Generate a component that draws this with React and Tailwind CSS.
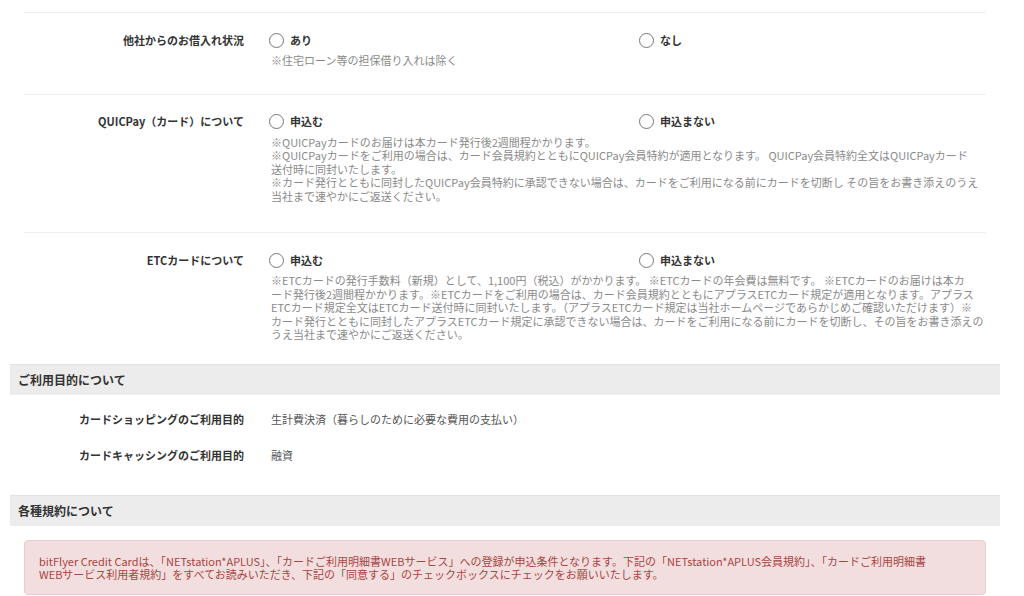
// Application form — borrowing / QUICPay / ETC options, purpose, terms notice.

const FONT = { fontFamily: '"Noto Sans CJK JP", "Noto Sans", sans-serif' };

const optionRows = [
  {
    label: "他社からのお借入れ状況",
    options: ["あり", "なし"],
    notes: ["※住宅ローン等の担保借り入れは除く"],
    pb: "pb-[26px]",
  },
  {
    label: "QUICPay（カード）について",
    options: ["申込む", "申込まない"],
    notes: [
      "※QUICPayカードのお届けは本カード発行後2週間程かかります。",
      "※QUICPayカードをご利用の場合は、カード会員規約とともにQUICPay会員特約が適用となります。 QUICPay会員特約全文はQUICPayカード",
      "送付時に同封いたします。",
      "※カード発行とともに同封したQUICPay会員特約に承認できない場合は、カードをご利用になる前にカードを切断し その旨をお書き添えのうえ",
      "当社まで速やかにご返送ください。",
    ],
    pb: "pb-[29px]",
  },
  {
    label: "ETCカードについて",
    options: ["申込む", "申込まない"],
    notes: [
      "※ETCカードの発行手数料（新規）として、1,100円（税込）がかかります。 ※ETCカードの年会費は無料です。 ※ETCカードのお届けは本カ",
      "ード発行後2週間程かかります。※ETCカードをご利用の場合は、カード会員規約とともにアプラスETCカード規定が適用となります。アプラス",
      "ETCカード規定全文はETCカード送付時に同封いたします。（アプラスETCカード規定は当社ホームページであらかじめご確認いただけます）※",
      "カード発行とともに同封したアプラスETCカード規定に承認できない場合は、カードをご利用になる前にカードを切断し、その旨をお書き添えの",
      "うえ当社まで速やかにご返送ください。",
    ],
    pb: "pb-[22px]",
  },
];

const purposes = [
  { label: "カードショッピングのご利用目的", value: "生計費決済（暮らしのために必要な費用の支払い）" },
  { label: "カードキャッシングのご利用目的", value: "融資" },
];

const Radio = ({ children }) => (
  <label className="flex h-4 items-center gap-[6px] text-[11px] font-bold text-[#333]">
    <span className="h-[15px] w-[15px] rounded-full border border-[#777] bg-white" />
    {children}
  </label>
);

const OptionRow = ({ row }) => (
  <div className={`mx-[14px] flex border-t border-[#eeeeee] pt-[19px] ${row.pb}`}>
    <div className="flex h-4 w-[220px] shrink-0 items-center justify-end text-[11px] font-bold text-[#333]">
      {row.label}
    </div>
    <div className="ml-[25px] flex-1">
      <div className="flex">
        <div className="w-[370px]">
          <Radio>{row.options[0]}</Radio>
        </div>
        <Radio>{row.options[1]}</Radio>
      </div>
      <div className="mt-[6px] ml-[2px] text-[11px] leading-[13.5px] whitespace-nowrap text-[#8a8a8a]">
        {row.notes.map((line, i) => (
          <p key={i} className="h-[13.5px]">
            {line}
          </p>
        ))}
      </div>
    </div>
  </div>
);

const SectionHeader = ({ children }) => (
  <div className="flex h-[31px] items-center border-t border-[#e2e2e2] bg-[#ececec] px-2 text-[12px] font-bold text-[#333]">
    {children}
  </div>
);

export default function App() {
  return (
    <div className="min-h-screen bg-white" style={FONT}>
      <div className="mx-[10px] w-[990px] pt-3">
        {optionRows.map((row) => (
          <OptionRow key={row.label} row={row} />
        ))}

        <SectionHeader>ご利用目的について</SectionHeader>
        <div className="mx-[14px] pt-[7px] pb-[21px]">
          {purposes.map((p) => (
            <div key={p.label} className="flex h-9 items-center">
              <div className="w-[220px] shrink-0 text-right text-[11px] font-bold text-[#333]">
                {p.label}
              </div>
              <div className="ml-[27px] text-[11px] text-[#555]">{p.value}</div>
            </div>
          ))}
        </div>

        <SectionHeader>各種規約について</SectionHeader>
        <div className="mx-[14px] mt-[14px] rounded border border-[#ebccd1] bg-[#f2dede] px-[14px] pt-[14px] pb-[13px] text-[11px] leading-[13px] text-[#a94442]">
          <p>
            bitFlyer Credit Cardは、「NETstation*APLUS」、「カードご利用明細書WEBサービス」への登録が申込条件となります。下記の「NETstation*APLUS会員規約」、「カードご利用明細書
          </p>
          <p>
            WEBサービス利用者規約」をすべてお読みいただき、下記の「同意する」のチェックボックスにチェックをお願いいたします。
          </p>
        </div>
      </div>
    </div>
  );
}
